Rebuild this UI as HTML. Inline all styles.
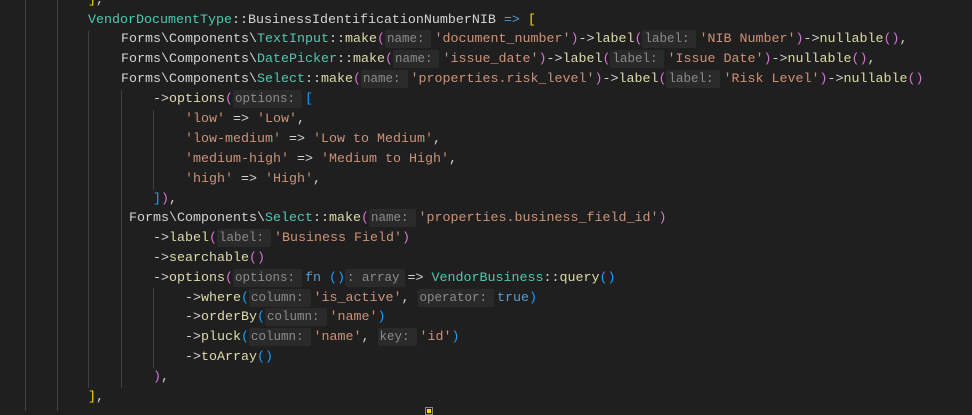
<!DOCTYPE html>
<html><head><meta charset="utf-8"><style>
html,body{margin:0;padding:0;background:#1f1f1f;width:972px;height:411px;overflow:hidden}
.l{position:absolute;white-space:pre;font-family:"Liberation Mono",monospace;font-size:13.33px;line-height:20px;height:20px;color:#d4d4d4}
.t{color:#4ec9b0}.m{color:#dcdcaa}.s{color:#ce9178}.k{color:#569cd6}.v{color:#9cdcfe}.w{color:#d4d4d4}
.g{color:#ffd700}.p{color:#da70d6}.b{color:#179fff}
.h{background:#2a2a2a;color:#8b8b8b;font-size:12.5px;padding:0 7px 0 2px;margin-right:3px;border-radius:2px;display:inline-block;line-height:18px}
.gd{position:absolute;width:1px;background:#404040}
</style></head><body>
<div class="gd" style="left:25px;top:0;height:411px"></div>
<div class="gd" style="left:57px;top:0;height:411px"></div>
<div class="gd" style="left:88px;top:31px;height:357px"></div>
<div class="gd" style="left:121px;top:90px;height:298px"></div>
<div class="gd" style="left:153px;top:110px;height:80px"></div>
<div class="gd" style="left:153px;top:288px;height:80px"></div>

<div class="l" style="left:88px;top:-9px"><span class="g">]</span>,</div>
<div class="l" style="left:88px;top:11px"><span class="t">VendorDocumentType</span>::<span class="w">BusinessIdentificationNumberNIB</span> <span class="k">=&gt;</span> <span class="g">[</span></div>
<div class="l" style="left:121px;top:30px">Forms\Components\<span class="t">TextInput</span>::<span class="m">make</span><span class="p">(</span><span class="h">name:</span><span class="s">'document_number'</span><span class="p">)</span>-&gt;<span class="m">label</span><span class="p">(</span><span class="h">label:</span><span class="s">'NIB Number'</span><span class="p">)</span>-&gt;<span class="m">nullable</span><span class="p">()</span>,</div>
<div class="l" style="left:121px;top:50px">Forms\Components\<span class="t">DatePicker</span>::<span class="m">make</span><span class="p">(</span><span class="h">name:</span><span class="s">'issue_date'</span><span class="p">)</span>-&gt;<span class="m">label</span><span class="p">(</span><span class="h">label:</span><span class="s">'Issue Date'</span><span class="p">)</span>-&gt;<span class="m">nullable</span><span class="p">()</span>,</div>
<div class="l" style="left:121px;top:70px">Forms\Components\<span class="t">Select</span>::<span class="m">make</span><span class="p">(</span><span class="h">name:</span><span class="s">'properties.risk_level'</span><span class="p">)</span>-&gt;<span class="m">label</span><span class="p">(</span><span class="h">label:</span><span class="s">'Risk Level'</span><span class="p">)</span>-&gt;<span class="m">nullable</span><span class="p">()</span></div>
<div class="l" style="left:153px;top:90px">-&gt;<span class="m">options</span><span class="p">(</span><span class="h">options:</span><span class="b">[</span></div>
<div class="l" style="left:185px;top:110px"><span class="s">'low'</span> =&gt; <span class="s">'Low'</span>,</div>
<div class="l" style="left:185px;top:130px"><span class="s">'low-medium'</span> =&gt; <span class="s">'Low to Medium'</span>,</div>
<div class="l" style="left:185px;top:150px"><span class="s">'medium-high'</span> =&gt; <span class="s">'Medium to High'</span>,</div>
<div class="l" style="left:185px;top:170px"><span class="s">'high'</span> =&gt; <span class="s">'High'</span>,</div>
<div class="l" style="left:153px;top:190px"><span class="b">]</span><span class="p">)</span>,</div>
<div class="l" style="left:129px;top:209px">Forms\Components\<span class="t">Select</span>::<span class="m">make</span><span class="p">(</span><span class="h">name:</span><span class="s">'properties.business_field_id'</span><span class="p">)</span></div>
<div class="l" style="left:153px;top:229px">-&gt;<span class="m">label</span><span class="p">(</span><span class="h">label:</span><span class="s">'Business Field'</span><span class="p">)</span></div>
<div class="l" style="left:153px;top:249px">-&gt;<span class="m">searchable</span><span class="p">()</span></div>
<div class="l" style="left:153px;top:269px">-&gt;<span class="m">options</span><span class="p">(</span><span class="h">options:</span><span class="k">fn</span> <span class="b">()</span><span class="h" style="padding-right:5px">: array</span>=&gt; <span class="t">VendorBusiness</span>::<span class="m">query</span><span class="b">()</span></div>
<div class="l" style="left:185px;top:289px">-&gt;<span class="m">where</span><span class="b">(</span><span class="h">column:</span><span class="s">'is_active'</span>, <span class="h">operator:</span><span class="k">true</span><span class="b">)</span></div>
<div class="l" style="left:185px;top:308px">-&gt;<span class="m">orderBy</span><span class="b">(</span><span class="h">column:</span><span class="s">'name'</span><span class="b">)</span></div>
<div class="l" style="left:185px;top:328px">-&gt;<span class="m">pluck</span><span class="b">(</span><span class="h">column:</span><span class="s">'name'</span>, <span class="h">key:</span><span class="s">'id'</span><span class="b">)</span></div>
<div class="l" style="left:185px;top:348px">-&gt;<span class="m">toArray</span><span class="b">()</span></div>
<div class="l" style="left:153px;top:368px"><span class="p">)</span>,</div>
<div class="l" style="left:88px;top:388px"><span class="g">]</span>,</div>
<div style="position:absolute;left:425px;top:407px;width:6px;height:6px;border:1px solid #8a8a8a;background:#1f1f1f"><div style="margin:1px 1px;width:4px;height:4px;background:#ffd700"></div></div>
</body></html>
